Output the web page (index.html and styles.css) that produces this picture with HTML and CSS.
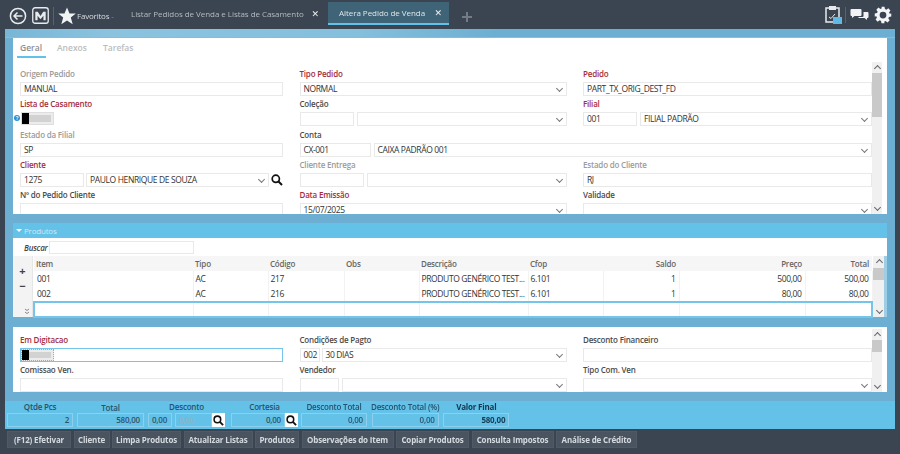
FILE: index.html
```html
<!DOCTYPE html>
<html lang="pt-BR">
<head>
<meta charset="utf-8">
<title>Altera Pedido de Venda</title>
<link rel="stylesheet" href="styles.css">
</head>
<body>
<div class="app">
  <header class="topbar">
    <svg class="ico-back" viewBox="0 0 18 18"><circle cx="9" cy="9" r="7.6" fill="none" stroke="#e8eaec" stroke-width="1.5"/><path d="M13.5 9H5M8.5 5.5 5 9l3.5 3.5" fill="none" stroke="#e8eaec" stroke-width="1.5"/></svg>
    <svg class="ico-m" viewBox="0 0 18 18"><rect x=".8" y=".8" width="16.4" height="16.4" rx="2.5" fill="#3b4451" stroke="#e8eaec" stroke-width="1.4"/><path d="M3.5 14V5h2.600L9 9.500 11.900 5h2.600v9h-2.400V9.200L9 13 5.900 9.200V14z" fill="#e8eaec"/></svg>
    <span class="vsep"></span>
    <svg class="ico-star" viewBox="0 0 18 18"><path d="m9 .6 2.500 6h6.300l-5 3.900 1.900 6.700L9 13.400l-5.700 3.800 1.900-6.700-5-3.900h6.300z" fill="#f2f3f4"/></svg>
    <span class="fav">Favoritos <span class="fav-caret">-</span></span>
    <div class="tab tab-list"><span>Listar Pedidos de Venda e Listas de Casamento</span><b class="x">✕</b></div>
    <div class="tab tab-on"><span>Altera Pedido de Venda</span><b class="x">✕</b></div>
    <svg class="ico-plus" viewBox="0 0 10 10"><path d="M4 0h2v4h4v2H6v4H4V6H0V4h4z" fill="#737b86"/></svg>
    <div class="top-right">
      <span class="clip">
        <svg class="ico-clip" viewBox="0 0 15 18"><path d="M1 3h13v14H1z" fill="none" stroke="#e8eaec" stroke-width="1.500"/><path d="M4 1h7v4H4z" fill="#e8eaec"/><path d="m4 12 2 1.500L10 9" fill="none" stroke="#e8eaec"/></svg>
        <i class="clip-badge"></i>
      </span>
      <span class="vsep vsep-r"></span>
      <svg class="ico-chat" viewBox="0 0 18 12"><path d="M0 1q0-1 1-1h9q1 0 1 1v5q0 1-1 1H4L1.500 9V7H1Q0 7 0 6z" fill="#f2f3f4"/><path d="M12 3h5q1 0 1 1v4q0 1-1 1h-.5v2L14 9H8V8h4q1 0 1-1V3z" fill="#f2f3f4"/></svg>
      <svg class="ico-gear" viewBox="0 0 24 24"><path fill="#f4f5f6" fill-rule="evenodd" d="M10 1h4l.6 3.100 1.900.8 2.600-1.800 2.800 2.800-1.800 2.600.8 1.900L23 10v4l-3.100.6-.8 1.900 1.800 2.600-2.800 2.800-2.600-1.800-1.900.8L14 23h-4l-.6-3.100-1.900-.8-2.600 1.800-2.800-2.800 1.800-2.600-.8-1.900L1 14v-4l3.100-.6.8-1.900-1.800-2.600 2.800-2.800 2.600 1.800 1.900-.8zM12 7.500a4.500 4.500 0 1 0 0 9 4.500 4.500 0 0 0 0-9z"/></svg>
    </div>
  </header>

  <main class="panel">
    <div class="strip"></div>
    <section class="card card-top">
      <nav class="subtabs">
        <span class="subtab subtab-on">Geral</span>
        <span class="subtab subtab-mid">Anexos</span>
        <span class="subtab">Tarefas</span>
      </nav>
      <div class="scroll-wrap">
        <div class="form">
          <div class="field"><label class="muted">Origem Pedido</label><div class="in">MANUAL</div></div>
          <div class="field"><label class="req">Tipo Pedido</label><div class="in combo">NORMAL</div></div>
          <div class="field"><label class="req">Pedido</label><div class="in">PART_TX_ORIG_DEST_FD</div></div>

          <div class="field"><label class="req">Lista de Casamento</label><i class="info">?</i><div class="toggle"><i class="knob"></i><i class="track"></i></div></div>
          <div class="field"><label>Coleção</label><div class="pair pair-col"><div class="in"></div><div class="in combo"></div></div></div>
          <div class="field"><label class="req">Filial</label><div class="pair pair-fil"><div class="in">001</div><div class="in combo">FILIAL PADRÃO</div></div></div>

          <div class="field"><label class="muted">Estado da Filial</label><div class="in">SP</div></div>
          <div class="field span2"><label>Conta</label><div class="pair pair-con"><div class="in">CX-001</div><div class="in combo">CAIXA PADRÃO 001</div></div></div>

          <div class="field"><label class="req">Cliente</label><div class="pair pair-cli"><div class="in">1275</div><div class="in combo">PAULO HENRIQUE DE SOUZA</div>
            <svg class="lens" viewBox="0 0 12 12"><circle cx="4.800" cy="4.800" r="3.600" fill="none" stroke="#111" stroke-width="1.700"/><path d="m7.500 7.500 3.500 3.500" stroke="#111" stroke-width="2"/></svg></div></div>
          <div class="field"><label class="muted">Cliente Entrega</label><div class="pair pair-ent"><div class="in"></div><div class="in combo"></div></div></div>
          <div class="field"><label class="muted">Estado do Cliente</label><div class="in">RJ</div></div>

          <div class="field"><label>Nº do Pedido Cliente</label><div class="in"></div></div>
          <div class="field"><label class="req">Data Emissão</label><div class="in combo">15/07/2025</div></div>
          <div class="field"><label>Validade</label><div class="in combo"></div></div>
        </div>
        <div class="vbar vbar-top"><i class="chev chev-up"></i><i class="thumb thumb-lg"></i><i class="chev chev-down"></i></div>
      </div>
    </section>

    <section class="products">
      <div class="prod-head"><i class="tri"></i>Produtos</div>
      <div class="search"><em>Buscar</em><div class="in in-search"></div></div>
      <div class="grid-wrap">
        <div class="gutter"><span class="plus">+</span><span class="minus">−</span>
          <svg class="dbl" viewBox="0 0 6 7"><path d="m1 1 2 1.500L5 1M1 4l2 1.500L5 4" fill="none" stroke="#888"/></svg></div>
        <table class="tbl">
          <colgroup><col class="c1"><col class="c2"><col class="c3"><col class="c4"><col class="c5"><col class="c6"><col class="c7"><col class="c8"><col class="c9"></colgroup>
          <thead><tr><th>Item</th><th>Tipo</th><th>Código</th><th>Obs</th><th>Descrição</th><th>Cfop</th><th class="r">Saldo</th><th class="r">Preço</th><th class="r">Total</th></tr></thead>
          <tbody>
            <tr><td>001</td><td>AC</td><td>217</td><td></td><td>PRODUTO GENÉRICO TEST...</td><td>6.101</td><td class="r">1</td><td class="r">500,00</td><td class="r">500,00</td></tr>
            <tr><td>002</td><td>AC</td><td>216</td><td></td><td>PRODUTO GENÉRICO TEST...</td><td>6.101</td><td class="r">1</td><td class="r">80,00</td><td class="r">80,00</td></tr>
            <tr class="new"><td></td><td></td><td></td><td></td><td></td><td></td><td></td><td></td><td></td></tr>
          </tbody>
        </table>
        <div class="vbar vbar-grid"><i class="chev chev-up"></i><i class="thumb thumb-sm"></i><i class="chev chev-down"></i></div>
      </div>
    </section>

    <section class="card card-bot">
      <div class="form form-bot">
        <div class="field"><label class="req">Em Digitacao</label><div class="in in-focus"><div class="toggle toggle-in"><i class="knob"></i><i class="track"></i></div></div></div>
        <div class="field"><label>Condições de Pagto</label><div class="pair pair-con2"><div class="in">002</div><div class="in combo">30 DIAS</div></div></div>
        <div class="field"><label>Desconto Financeiro</label><div class="in"></div></div>
        <div class="field"><label>Comissao Ven.</label><div class="in"></div></div>
        <div class="field"><label>Vendedor</label><div class="pair pair-ven"><div class="in"></div><div class="in combo"></div></div></div>
        <div class="field"><label>Tipo Com. Ven</label><div class="in combo"></div></div>
      </div>
      <div class="vbar vbar-bot"><i class="chev chev-up"></i><i class="thumb thumb-sm"></i><i class="chev chev-down"></i></div>
    </section>

    <section class="totals">
      <div class="tot t-qtde"><span>Qtde Pcs</span><div class="box">2</div></div>
      <div class="tot t-total"><span class="low">Total</span><div class="box box-wide">580,00</div></div>
      <div class="tot t-desc"><span>Desconto</span><div class="box-row"><div class="box box-a">0,00</div><div class="box box-b">0,00</div><button class="lens-btn"><svg class="lens" viewBox="0 0 12 12"><circle cx="4.800" cy="4.800" r="3.600" fill="none" stroke="#111" stroke-width="1.700"/><path d="m7.500 7.500 3.500 3.500" stroke="#111" stroke-width="2"/></svg></button></div></div>
      <div class="tot t-cort"><span>Cortesia</span><div class="box-row"><div class="box box-c">0,00</div><button class="lens-btn"><svg class="lens" viewBox="0 0 12 12"><circle cx="4.800" cy="4.800" r="3.600" fill="none" stroke="#111" stroke-width="1.700"/><path d="m7.500 7.500 3.500 3.500" stroke="#111" stroke-width="2"/></svg></button></div></div>
      <div class="tot t-dt"><span>Desconto Total</span><div class="box">0,00</div></div>
      <div class="tot t-dp"><span>Desconto Total (%)</span><div class="box box-wide">0,00</div></div>
      <div class="tot t-vf"><span class="strong">Valor Final</span><div class="box strong">580,00</div></div>
    </section>
  </main>

  <footer class="actions">
    <button class="act">(F12) Efetivar</button>
    <button class="act">Cliente</button>
    <button class="act">Limpa Produtos</button>
    <button class="act">Atualizar Listas</button>
    <button class="act">Produtos</button>
    <button class="act">Observações do Item</button>
    <button class="act">Copiar Produtos</button>
    <button class="act">Consulta Impostos</button>
    <button class="act">Análise de Crédito</button>
  </footer>
</div>
</body>
</html>
```
FILE: styles.css
```css
* { box-sizing: border-box; }
html, body { margin: 0; padding: 0; height: 100%; overflow: hidden; background: #3b4451; }
body { font-family: "Open Sans", "Noto Sans", sans-serif; font-size: 8px; letter-spacing: -0.2px; color: #333; }
.app { width: 900px; height: 454px; display: flex; flex-direction: column; filter: blur(0.35px); }

.topbar { height: 29px; display: flex; align-items: center; padding: 2px 0 0 9px; color: #c9ced3; flex: none; }
.ico-back { width: 18px; height: 18px; flex: none; }
.ico-m { width: 17px; height: 17px; margin-left: 5px; flex: none; }
.vsep { width: 1px; height: 18px; background: #59626d; margin: 0 4px; flex: none; }
.ico-star { width: 18px; height: 18px; flex: none; }
.fav { margin-left: 1px; width: 46px; font-size: 8px; color: #d7dbdf; margin-right: 8px; flex: none; white-space: nowrap; }
.fav-caret { color: #8c939b; }
.tab { height: 23px; display: flex; align-items: center; margin-top: -4px; font-size: 8px; letter-spacing: -0.05px; color: #b4bbc2; flex: none; white-space: nowrap; }
.tab .x { font-size: 9px; color: #eef0f2; font-family: "DejaVu Sans", sans-serif; letter-spacing: 0; }
.tab-list { width: 197px; justify-content: space-between; padding-right: 9px; }
.tab-on { width: 121px; padding: 0 7px 0 11px; justify-content: space-between; background: #3f6377; border-bottom: 2px solid #63c1e9; color: #dfe6ea; }
.ico-plus { width: 10px; height: 10px; margin-left: 13px; margin-top: 2px; flex: none; }
.top-right { margin-left: auto; display: flex; align-items: center; padding-right: 8px; margin-top: -2px; }
.clip { position: relative; width: 16px; height: 19px; display: block; }
.ico-clip { width: 15px; height: 18px; display: block; }
.clip-badge { position: absolute; right: -1px; bottom: 0; width: 9px; height: 7px; background: #5fb9e4; }
.vsep-r { margin: 0 4px; height: 16px; }
.ico-chat { width: 19px; height: 12px; flex: none; margin-right: 5px; }
.ico-gear { width: 18px; height: 18px; flex: none; }

.panel { flex: none; height: 400px; margin: 0 5px; background: #6dafd2; display: flex; flex-direction: column; }
.strip { height: 9px; flex: none; background: linear-gradient(transparent 8px, #6fc6ea 8px), linear-gradient(90deg, #78b6d6, #8bc3df 12%, #84bfdc 40%, #6dafd2 55%); }
.card { background: #fff; margin: 0 8px; flex: none; }
.card-top { height: 176px; display: flex; flex-direction: column; }
.subtabs { height: 20px; display: flex; padding-left: 4px; flex: none; }
.subtab { font-size: 8.500px; font-weight: 600; letter-spacing: 0; color: #bcbcbc; padding: 4px 3px 0; white-space: nowrap; }
.subtab-on { color: #8d8d8d; border-bottom: 2px solid #63c1e9; width: 29px; margin-right: 8px; }
.subtab-mid { width: 46px; }
.scroll-wrap { flex: 1; display: flex; overflow: hidden; min-height: 0; }
.form { flex: none; width: 859px; display: grid; grid-template-columns: 263px 267px 289px; column-gap: 16.500px; grid-auto-rows: 30.300px; padding: 11px 0 0 7px; align-content: start; overflow: hidden; }
.field { position: relative; min-width: 0; }
.field label { display: block; height: 13px; line-height: 9px; font-size: 8px; font-weight: 600; color: #4b4b4b; white-space: nowrap; }
label.req { color: #a42d3c; }
label.muted { color: #9b9b9b; }
.span2 { grid-column: span 2; }
.in { height: 14px; border: 1px solid #e9e9e9; background: #fff; line-height: 12px; padding-left: 3px; font-size: 8.500px; letter-spacing: -0.38px; font-weight: 500; color: #333; white-space: nowrap; overflow: hidden; position: relative; min-width: 0; }
.combo::after { content: ""; position: absolute; right: 4px; top: 3px; width: 4px; height: 4px; border-right: 1px solid #777; border-bottom: 1px solid #777; transform: rotate(45deg); }
.pair { display: grid; column-gap: 2px; align-items: center; }
.pair-col { grid-template-columns: 54px 1fr; column-gap: 3px; }
.pair-fil { grid-template-columns: 54px 1fr; column-gap: 3px; }
.pair-con { grid-template-columns: 71px 1fr; column-gap: 3px; }
.pair-cli { grid-template-columns: 64px 183px 14px; }
.pair-ent { grid-template-columns: 64px 1fr; column-gap: 3px; }
.pair-con2 { grid-template-columns: 20px 1fr; }
.pair-ven { grid-template-columns: 39px 1fr; column-gap: 3px; }
.lens { width: 12px; height: 12px; display: block; }
.info { position: absolute; left: -6px; top: 16px; width: 6px; height: 6px; border-radius: 50%; background: #2c8fd0; color: #fff; font: 700 5px/6px "Liberation Sans", sans-serif; letter-spacing: 0; text-align: center; }
.toggle { display: flex; width: 33px; height: 13px; border: 1px solid #dedede; background: #ececec; margin-left: 1px; }
.knob { display: block; width: 7px; background: #000; flex: none; }
.track { display: block; flex: 1; background: #d2d2d2; margin: 2px 2px 2px 0; }
.toggle-in { margin: 0; border: 1px dotted #aaa; height: 12px; }
.in-focus { border-color: #74c5e9; padding: 0; overflow: visible; }
.vbar { width: 10px; margin-left: 0; background: #f0f0f0; display: flex; flex-direction: column; flex: none; }
.vbar-top { margin-top: 4px; }
.chev { display: block; height: 11px; flex: none; position: relative; }
.chev::after { content: ""; position: absolute; left: 50%; width: 4px; height: 4px; margin-left: -2px; border-right: 1.500px solid #666; border-bottom: 1.500px solid #666; }
.chev-up::after { top: 4px; transform: rotate(-135deg); }
.chev-down { margin-top: auto; }
.chev-down::after { top: 2px; transform: rotate(45deg); }
.thumb { background: #c9c9c9; display: block; flex: none; }
.thumb-lg { height: 44px; }
.thumb-sm { height: 12px; }

.products { margin: 9px 8px 0; flex: none; }
.prod-head { height: 15px; background: #64c1e8; color: #cdeaf7; font-size: 8px; display: flex; align-items: center; padding-left: 2px; }
.tri { width: 0; height: 0; border: 3px solid transparent; border-top: 3px solid #fff; border-bottom: 0; margin: 0 2px 0 1px; }
.search { height: 18px; background: #fff; display: flex; align-items: center; padding-left: 11px; }
.search em { font-size: 8px; color: #444; width: 25px; font-weight: 600; }
.in-search { width: 145px; height: 13px; }
.grid-wrap { display: flex; height: 61px; background: #9fcde6; }
.gutter { width: 20px; background: #f3f3f3; border-right: 1px solid #e6e6e6; display: flex; flex-direction: column; align-items: center; flex: none; color: #444; }
.plus { font-size: 11px; line-height: 15px; height: 15px; margin-top: 7px; font-weight: 700; letter-spacing: 0; }
.minus { font-size: 11px; line-height: 15px; height: 15px; font-weight: 700; letter-spacing: 0; }
.dbl { width: 6px; height: 7px; margin: auto 0 2px 8px; display: block; flex: none; }
.tbl { table-layout: fixed; border-collapse: collapse; width: 838px; flex: none; background: #fff; font-size: 8px; }
.c1 { width: 159px; } .c2 { width: 75px; } .c3 { width: 76px; } .c4 { width: 75px; } .c5 { width: 109px; } .c6 { width: 75px; } .c7 { width: 76px; } .c8 { width: 126px; } .c9 { width: 67px; }
.tbl th { height: 15px; background: #f6f6f6; font-weight: 600; color: #666; text-align: left; padding: 0 3px 0 2px; }
.tbl td { height: 15.500px; padding: 0 3px 0 2px; font-size: 8.500px; letter-spacing: -0.38px; font-weight: 500; color: #333; white-space: nowrap; overflow: hidden; border-right: 1px solid #f2f2f2; }
.tbl td:first-child { padding-left: 3px; }
.tbl .r { text-align: right; }
.tbl .new td { height: 15px; border-top: 2px solid #74c5e9; border-bottom: 2px solid #74c5e9; }
.tbl .new td:first-child { border-left: 2px solid #74c5e9; }
.tbl .new td:last-child { border-right: 2px solid #74c5e9; }
.vbar-grid { width: 11px; }
.vbar-grid .thumb { margin-top: 1px; }

.card-bot { margin-top: 10px; height: 65px; display: flex; overflow: hidden; }
.form-bot { padding-top: 8px; height: 65px; }
.vbar-bot { margin-top: 2px; }

.totals { margin-top: 9px; height: 28px; background: #64c1e8; display: flex; padding: 0 0 0 2px; flex: none; align-items: flex-start; }
.tot { display: flex; flex-direction: column; align-items: center; flex: none; margin-right: 4px; }
.tot > span { height: 12px; line-height: 12px; font-size: 8px; font-weight: 600; color: #24536e; white-space: nowrap; }
.tot > span.low { line-height: 14px; }
.tot > span.strong { color: #12384f; font-weight: 700; }
.box { height: 14px; width: 66px; border: 1px solid #8dd0ee; line-height: 12px; text-align: right; padding-right: 3px; font-size: 8px; font-weight: 600; color: #2f5469; }
.box-wide { width: 67px; }
.box.strong { font-weight: 700; color: #173d54; }
.box-row { display: flex; align-items: center; }
.t-desc { width: 77px; margin-right: 6px; }
.t-cort { width: 67px; margin-right: 3px; }
.box-a { width: 24px; margin-right: 3px; text-align: left; padding-left: 3px; }
.box-b { width: 37px; text-align: left; padding-left: 3px; color: #8fb4c7; }
.box-c { width: 54px; }
.lens-btn { width: 13px; height: 14px; border: 0; padding: 0 0 0 1px; background: #fff; display: block; flex: none; }
.lens-btn .lens { width: 11px; height: 11px; }

.actions { margin-top: 2px; height: 17px; display: grid; grid-template-columns: 64px 36px 69px 69px 44px 92px 73px 82px 81px; column-gap: 2.500px; padding-left: 7px; flex: none; justify-content: start; }
.act { background: #4a5461; border: 1px solid #505a67; color: #d5dade; font: 700 8px/1 "Open Sans", sans-serif; letter-spacing: -0.15px; padding: 0; white-space: nowrap; overflow: hidden; }
```
